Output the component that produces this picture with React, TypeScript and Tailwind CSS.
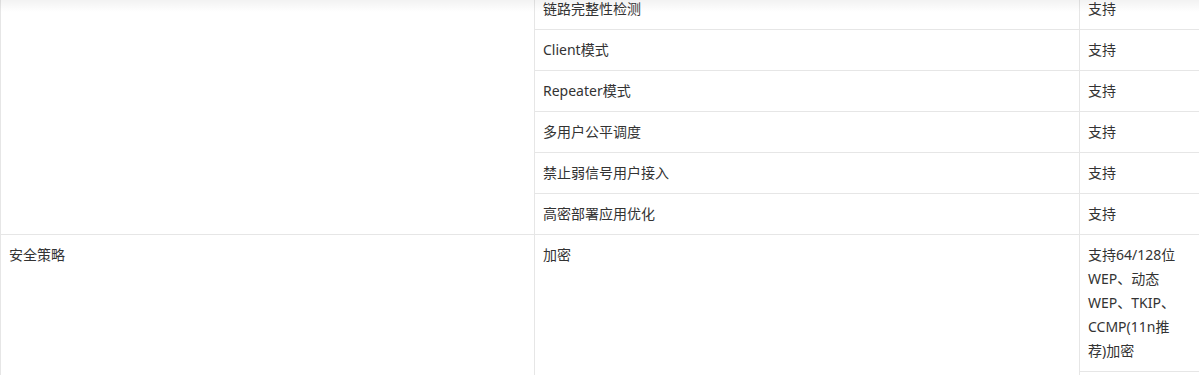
const groupRows = [
  '链路完整性检测',
  'Client模式',
  'Repeater模式',
  '多用户公平调度',
  '禁止弱信号用户接入',
  '高密部署应用优化',
]

const cell = 'border border-[#e6e6e6] px-2 py-2 align-top leading-6'

export default function App() {
  return (
    <div
      className="relative h-[375px] w-[1199px] overflow-hidden bg-white text-[14px] text-[#333]"
      style={{ fontFamily: '"Noto Sans", "Noto Sans CJK SC", sans-serif' }}
    >
      <table className="-mt-[12px] w-[1230px] table-fixed border-collapse">
        <colgroup>
          <col className="w-[534px]" />
          <col className="w-[545px]" />
          <col className="w-[151px]" />
        </colgroup>
        <tbody>
          {groupRows.map((name, i) => (
            <tr key={name}>
              {i === 0 && <td rowSpan={groupRows.length} className={cell} />}
              <td className={cell}>{name}</td>
              <td className={cell}>支持</td>
            </tr>
          ))}
          <tr>
            <td rowSpan={2} className={cell}>
              安全策略
            </td>
            <td rowSpan={2} className={cell}>
              加密
            </td>
            <td className={cell}>
              <div className="w-[96px]">支持64/128位WEP、动态WEP、TKIP、CCMP(11n推荐)加密</div>
            </td>
          </tr>
          <tr>
            {/* next row starts below the fold */}
            <td className={`${cell} h-[41px]`} />
          </tr>
        </tbody>
      </table>
      <div className="pointer-events-none absolute inset-x-0 top-0 h-[12px] bg-linear-to-b from-black/5 to-transparent" />
    </div>
  )
}
